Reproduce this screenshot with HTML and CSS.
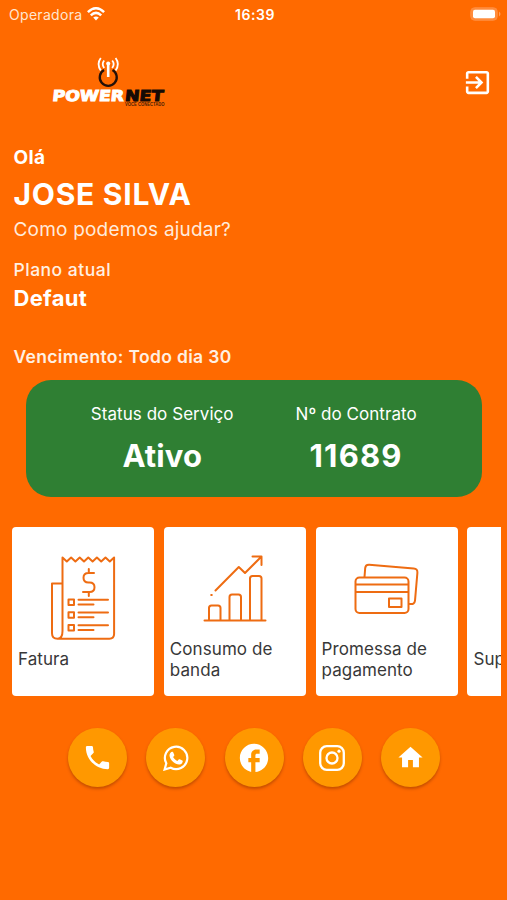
FILE: index.html
```html
<!DOCTYPE html>
<html lang="pt-BR">
<head>
<meta charset="utf-8">
<title>Powernet</title>
<link rel="stylesheet" href="styles.css">
</head>
<body>
<div class="status">
  <div class="carrier"><span>Operadora</span>
    <svg width="18" height="14" viewBox="0 0 18 14" fill="none" stroke="#fff" stroke-width="2.5"><path d="M.9 5.200Q9-2.600 17.100 5.200M3.800 8.400Q9 3.400 14.200 8.400"/><path d="M9 13.500L6.200 10.600Q9 8.200 11.800 10.600Z" fill="#fff" stroke="none"/></svg>
  </div>
  <time>16:39</time>
  <svg class="battery" width="31" height="14" viewBox="0 0 31 14"><rect x=".7" y=".7" width="26.600" height="12.600" rx="4" fill="#ff8c3d" stroke="#ff8c3d"/><rect x="3" y="2.700" width="22" height="8.600" rx="2" fill="#fff"/><path d="M29 4.500q3 2.500 0 5z" fill="#ff9d5c"/></svg>
</div>
<header class="header">
  <svg class="logo" width="116" height="54" viewBox="0 0 116 54">
    <g fill="none" stroke="#fff" stroke-width="1.800"><path d="M53.200 4.500q-3 3.500 0 7.500M49.800 2q-4.500 6 0 12.500M61.200 4.500q3 3.500 0 7.500M64.600 2q4.500 6 0 12.500"/></g>
    <path d="M53 14a8.500 8.500 0 1 0 8.500 0" fill="none" stroke="#241008" stroke-width="2.300"/>
    <path d="M57.200 7.500v13.500" stroke="#fff" stroke-width="2.600"/><circle cx="57.200" cy="7.500" r="2" fill="#fff"/>
    <g class="brand" transform="translate(0 44.800) skewX(-6)">
      <text x="1" textLength="71.500" lengthAdjust="spacingAndGlyphs" fill="#fff" stroke="#fff">POWER</text>
      <text x="73.500" textLength="38.500" lengthAdjust="spacingAndGlyphs" fill="#160a05" stroke="#160a05">NET</text>
    </g>
    <text class="tagline" x="74" y="50" textLength="39.500" lengthAdjust="spacingAndGlyphs">VOCÊ CONECTADO</text>
  </svg>
  <svg width="31" height="31" viewBox="0 0 24 24" fill="#fff"><path d="M10.090 15.590L11.500 17l5-5-5-5-1.410 1.410L12.670 11H3v2h9.670l-2.580 2.590zM19 3H5c-1.110 0-2 .9-2 2v4h2V5h14v14H5v-4H3v4c0 1.100.89 2 2 2h14c1.100 0 2-.9 2-2V5c0-1.100-.9-2-2-2z"/></svg>
</header>
<section class="intro">
  <p class="hello">Olá</p>
  <h1>JOSE SILVA</h1>
  <p class="help">Como podemos ajudar?</p>
  <p class="plan-label">Plano atual</p>
  <p class="plan">Defaut</p>
  <p class="due">Vencimento: Todo dia 30</p>
</section>
<section class="service">
  <div class="fact fact-status"><span>Status do Serviço</span><strong>Ativo</strong></div>
  <div class="fact fact-contract"><span>Nº do Contrato</span><strong>11689</strong></div>
</section>
<section class="tiles">
  <article class="tile">
    <svg width="142" height="114" viewBox="0 0 142 114" class="line"><path d="M50.500 104V30.500l4.300 4 4.300-4 4.300 4 4.300-4 4.300 4 4.300-4 4.300 4 4.300-4 4.300 4 4.300-4 4.300 4 4.300-4V107q0 4.700-4.700 4.700H45.500q-5.500 0-5.500-5.500V56.500h10.500M50.500 104q0 7.700-5 7.700"/><path d="M82 46H76.500q-5 0-5 4.700t5 4.800h1q5 0 5 4.700t-5 4.800H71M76.800 42v4M76.800 65v4"/><path d="M56.500 72.500h5.500v5.500h-5.500zM56.500 85.200h5.500v5.500h-5.500zM56.500 97.900h5.500v5.500h-5.500zM66.500 72.800H96M66.500 77.600h15M66.500 85.500H96M66.500 90.300h15M66.500 98.200H96M66.500 103h15"/></svg>
    <p>Fatura</p>
  </article>
  <article class="tile">
    <svg width="142" height="102" viewBox="0 0 142 102" class="line"><path d="M40.500 92.500h61M45 92V80q0-2.500 2.500-2.500h6.500q2.500 0 2.500 2.500v12M65.500 92V69q0-2.500 2.500-2.500h6.500q2.500 0 2.500 2.500v23M86 92V50.500q0-2.500 2.500-2.500h6.500q2.500 0 2.500 2.500v41.500M51.500 62.500L74.800 39l6.200 6L97 29M88.500 28.500H97.500V37M47.200 67h.6"/></svg>
    <p>Consumo de banda</p>
  </article>
  <article class="tile">
    <svg width="142" height="102" viewBox="0 0 142 102" class="line"><rect x="39.500" y="49.500" width="53" height="35.500" rx="4"/><path d="M40 56.500h52M40 64h52M73 70.500h12.500v8.500H73zM48.500 49l.7-9q.3-3.500 4-3.300l44.500 3.700q4 .3 3.700 4.300l-2.400 28q-.4 4-5.500 3.300"/></svg>
    <p>Promessa de pagamento</p>
  </article>
  <article class="tile">
    <p>Suporte</p>
  </article>
</section>
<nav class="actions">
  <a class="round"><svg width="31" height="31" viewBox="0 0 24 24"><path d="M6.620 10.790c1.440 2.830 3.760 5.140 6.590 6.590l2.200-2.200c.27-.27.67-.36 1.020-.24 1.120.37 2.330.57 3.570.57.55 0 1 .45 1 1V20c0 .55-.45 1-1 1-9.390 0-17-7.610-17-17 0-.55.45-1 1-1h3.500c.55 0 1 .45 1 1 0 1.250.2 2.450.57 3.570.11.35.03.74-.25 1.020l-2.200 2.200z"/></svg></a>
  <a class="round"><svg width="26" height="26" viewBox="0 0 26 26"><path d="M1.600 24.500l1.700-6.200A11.200 11.200 0 1 1 7.700 22.700z" fill="none" stroke="#fff" stroke-width="2.200"/><path d="M9.300 6.700c.5 0 .7.100 1 .8l1 2.400c.1.500-.1.900-.5 1.300l-.7.900c1 1.900 2.400 3.100 4.300 3.900l1.300-1.500c.3-.4.600-.4 1-.2l2.600 1.300c.5.300.5.600.4 1.200-.4 1.900-2.200 2.800-3.700 2.800-4.700-.4-9.200-5.100-9.500-9.100 0-1.600.8-2.800 1.700-3.600z"/></svg></a>
  <a class="round"><svg width="34" height="34" viewBox="0 0 24 24"><path d="M22 12c0-5.520-4.480-10-10-10S2 6.480 2 12c0 4.840 3.440 8.870 8 9.800V15H8v-3h2V9.500C10 7.570 11.570 6 13.500 6H16v3h-2c-.55 0-1 .45-1 1v2h3v3h-3v6.950c5.050-.5 9-4.760 9-9.950z"/></svg></a>
  <a class="round"><svg width="26" height="26" viewBox="0 0 26 26"><g fill="none" stroke="#fff" stroke-width="2.300"><rect x="1.200" y="1.200" width="23.600" height="23.600" rx="6.500"/><circle cx="13" cy="13" r="5.500"/></g><circle cx="20" cy="6.200" r="1.600"/></svg></a>
  <a class="round"><svg width="29" height="29" viewBox="0 0 24 24"><path d="M10 20v-6h4v6h5v-8h3L12 3 2 12h3v8z"/></svg></a>
</nav>
</body>
</html>
```
FILE: styles.css
```css
* { box-sizing: border-box; }
html, body, p, h1 { margin: 0; }
body {
  height: 900px;
  overflow: hidden;
  background: #ff6a00;
  color: #fff;
  font-family: Inter, "Liberation Sans", sans-serif;
}
svg { display: block; flex: none; }
.status {
  display: grid;
  grid-template-columns: 1fr auto 1fr;
  align-items: center;
  height: 28px;
  padding: 0 6px 0 9px;
  font-size: 14px;
}
.carrier { display: flex; align-items: center; gap: 5px; color: #ffe6d0; letter-spacing: .3px; }
.status time { font-weight: 600; letter-spacing: .6px; }
.battery { justify-self: end; }
.header {
  display: flex;
  justify-content: space-between;
  align-items: center;
  height: 109px;
  padding: 0 14px 0 51px;
}
.brand { font: 700 15px "DejaVu Sans", sans-serif; stroke-width: 1px; }
.tagline { font: 700 4.500px "Liberation Sans", sans-serif; fill: #4a1f05; }
.intro { display: flex; flex-direction: column; align-items: flex-start; padding-left: 13.500px; white-space: nowrap; }
.hello { margin-top: 9px; font-size: 19px; line-height: 24px; font-weight: 700; letter-spacing: .4px; }
h1 { margin-top: 5px; font-size: 30px; line-height: 38px; font-weight: 700; letter-spacing: .75px; }
.help { margin-top: 5px; font-size: 19px; line-height: 24px; color: #ffeadb; letter-spacing: .2px; }
.plan-label { margin-top: 17px; font-size: 17.500px; line-height: 22px; font-weight: 500; color: #fff0e2; letter-spacing: .5px; }
.plan { margin-top: 3px; font-size: 22px; line-height: 28px; font-weight: 700; letter-spacing: .3px; }
.due { margin-top: 34px; font-size: 17.500px; line-height: 22px; font-weight: 600; color: #fff0e2; letter-spacing: .33px; }
.service {
  display: flex;
  justify-content: center;
  height: 117px;
  margin: 12px 25.500px 0 26px;
  padding-top: 23px;
  border-radius: 25px;
  background: #2f7f33;
}
.fact { display: flex; flex-direction: column; align-items: center; }
.fact-status { margin-right: 62px; }
.fact span { font-size: 17px; line-height: 22px; letter-spacing: .05px; }
.fact strong { margin-top: 11px; font-size: 31px; line-height: 40px; letter-spacing: .1px; }
.fact-contract strong { letter-spacing: 1.200px; }
.tiles {
  display: flex;
  gap: 9.800px;
  margin: 30px 6px 0 0;
  padding-left: 12px;
  overflow: hidden;
}
.tile {
  display: flex;
  flex: none;
  flex-direction: column;
  justify-content: flex-end;
  width: 142px;
  height: 169px;
  border-radius: 4px;
  background: #fff;
}
.tile svg { margin-bottom: 9px; }
.tile p {
  padding: 0 6px 15.500px;
  color: #383838;
  font-size: 17px;
  line-height: 21px;
  letter-spacing: .08px;
}
.tile:first-child p, .tile:last-child p { padding-bottom: 26px; }
.tile:first-child svg { margin-bottom: 8px; }
.line { fill: none; stroke: #ee6c12; stroke-width: 2; stroke-linejoin: round; stroke-linecap: round; }
.actions { display: flex; justify-content: center; gap: 19.300px; margin-top: 32px; padding-left: 1px; }
.round {
  display: flex;
  align-items: center;
  justify-content: center;
  width: 59px;
  height: 59px;
  border-radius: 50%;
  background: #ff9800;
  box-shadow: 0 2px 3px rgba(90, 30, 0, .35);
}
.round svg { fill: #fff; }
```
